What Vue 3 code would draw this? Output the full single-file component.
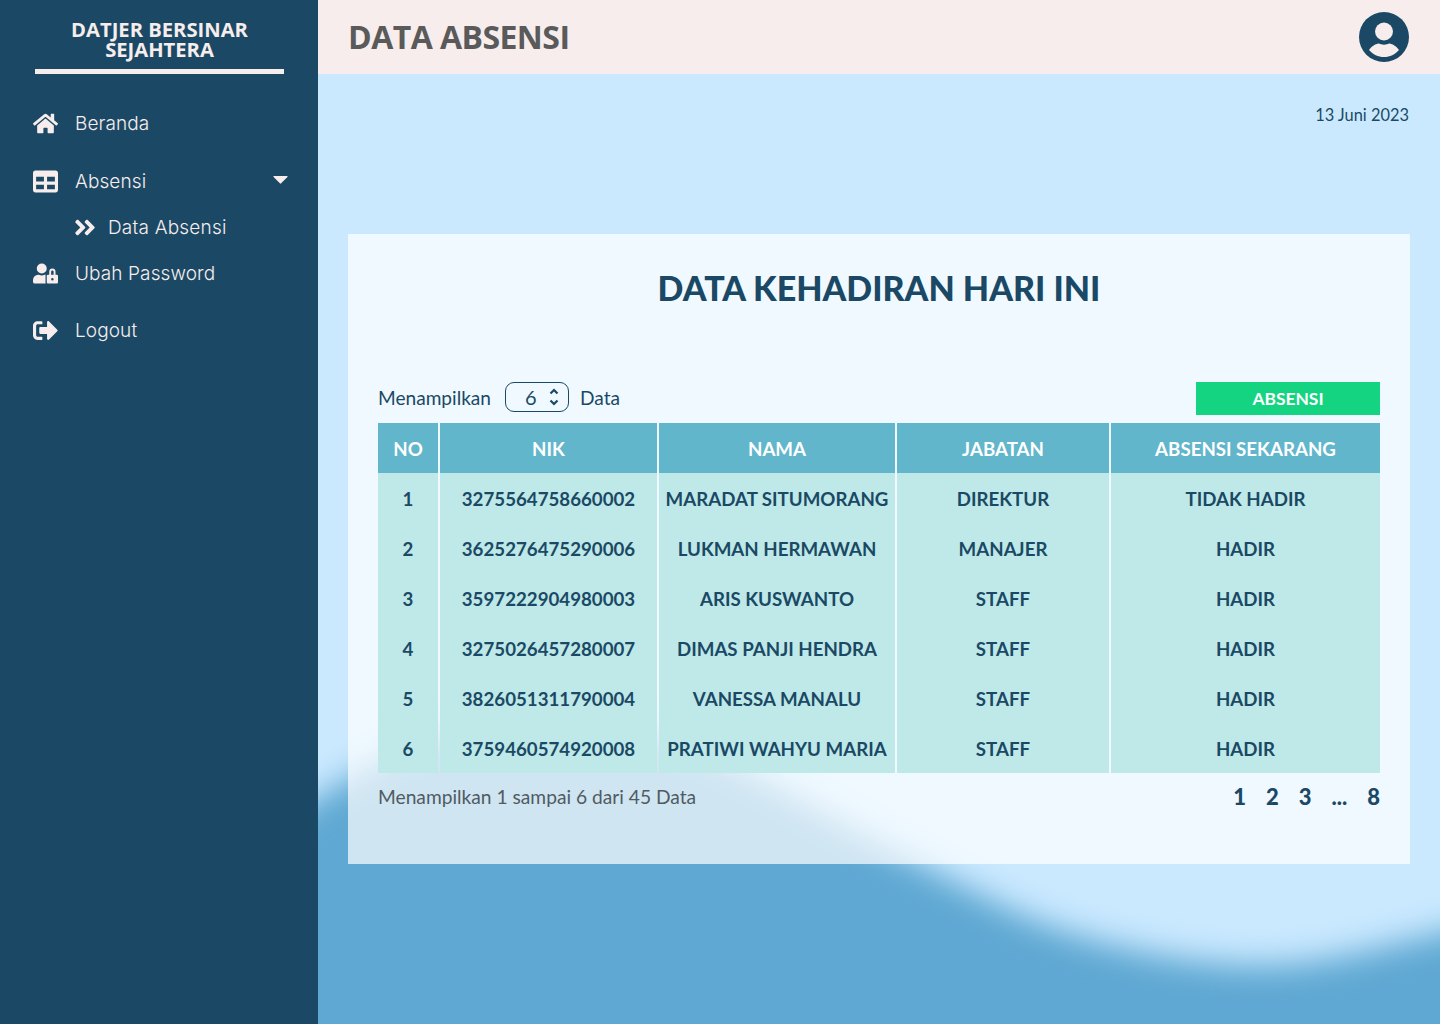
<template>
  <div class="page">
    <aside class="sidebar">
      <div class="brand">
        <div class="brand-name">DATJER BERSINAR<br />SEJAHTERA</div>
      </div>
      <nav class="menu">
        <a class="item item-first">
          <svg class="ico" viewBox="0 0 576 512"><path :d="icons.home" /></svg>
          <span>Beranda</span>
        </a>
        <a class="item">
          <svg class="ico" viewBox="0 0 512 512"><path :d="icons.table" /></svg>
          <span>Absensi</span>
          <svg class="caret" viewBox="0 0 16 9"><path d="M0.6 0h14.8c.5 0 .8.6.4 1L8.4 8.4a.6.6 0 0 1-.8 0L.2 1C-.2.6.1 0 .6 0z" /></svg>
        </a>
        <a class="subitem">
          <svg class="ico-sub" viewBox="0 0 448 512"><path :d="icons.angles" /></svg>
          <span>Data Absensi</span>
        </a>
        <a class="item">
          <svg class="ico" viewBox="0 0 640 512"><path :d="icons.userLock" /></svg>
          <span>Ubah Password</span>
        </a>
        <a class="item">
          <svg class="ico" viewBox="0 0 512 512"><path :d="icons.logout" /></svg>
          <span>Logout</span>
        </a>
      </nav>
    </aside>

    <main class="main">
      <svg class="wave" viewBox="-100 0 1322 1050">
        <path d="M-100 790 C-30 750 80 650 200 650 C310 650 380 670 432 699 C490 730 540 760 602 790 C650 815 690 835 716 846 C780 872 880 893 952 891 C1020 889 1070 870 1222 835 L1222 1050 L-100 1050 Z" />
      </svg>

      <header class="topbar">
        <h1>DATA ABSENSI</h1>
        <svg class="avatar" viewBox="0 0 50 50">
          <circle cx="25" cy="25" r="25" fill="#1b4965" />
          <circle cx="25" cy="19.500" r="9" fill="#f7eded" />
          <path d="M10 38 C13 33.500 18 31.500 20 31.500 C22 33 28 33 30 31.500 C32 31.500 37 33.500 40 38 C36 42.500 31 45 25 45 C19 45 14 42.500 10 38 Z" fill="#f7eded" />
        </svg>
      </header>

      <div class="date">13 Juni 2023</div>

      <section class="card">
        <h2>DATA KEHADIRAN HARI INI</h2>

        <div class="controls">
          <div class="show">
            <span>Menampilkan</span>
            <div class="select">
              <span class="select-value">6</span>
              <svg class="updown" viewBox="0 0 10 20">
                <path d="M1.500 6.500 L5 3 L8.500 6.500 M1.500 13.500 L5 17 L8.500 13.500" />
              </svg>
            </div>
            <span>Data</span>
          </div>
          <button class="btn">ABSENSI</button>
        </div>

        <table class="grid">
          <colgroup>
            <col style="width: 60px" />
            <col style="width: 217px" />
            <col style="width: 236px" />
            <col style="width: 212px" />
            <col />
          </colgroup>
          <thead>
            <tr>
              <th>NO</th>
              <th>NIK</th>
              <th>NAMA</th>
              <th>JABATAN</th>
              <th>ABSENSI SEKARANG</th>
            </tr>
          </thead>
          <tbody>
            <tr v-for="row in rows" :key="row.no">
              <td>{{ row.no }}</td>
              <td>{{ row.nik }}</td>
              <td>{{ row.nama }}</td>
              <td>{{ row.jabatan }}</td>
              <td>{{ row.status }}</td>
            </tr>
          </tbody>
        </table>

        <div class="foot">
          <span class="summary">Menampilkan 1 sampai 6 dari 45 Data</span>
          <div class="pages">
            <span>1</span>
            <span>2</span>
            <span>3</span>
            <span>...</span>
            <span>8</span>
          </div>
        </div>
      </section>
    </main>
  </div>
</template>

<script setup>
const icons = {
  home: 'M280.37 148.26L96 300.11V464a16 16 0 0 0 16 16l112.06-.29a16 16 0 0 0 15.92-16V368a16 16 0 0 1 16-16h64a16 16 0 0 1 16 16v95.64a16 16 0 0 0 16 16.05L464 480a16 16 0 0 0 16-16V300L295.67 148.26a12.19 12.19 0 0 0-15.3 0zM571.6 251.47L488 182.56V44.05a12 12 0 0 0-12-12h-56a12 12 0 0 0-12 12v72.61L318.47 43a48 48 0 0 0-61 0L4.34 251.47a12 12 0 0 0-1.6 16.9l25.5 31A12 12 0 0 0 45.15 301l235.22-193.74a12.19 12.19 0 0 1 15.3 0L530.9 301a12 12 0 0 0 16.9-1.6l25.5-31a12 12 0 0 0-1.7-16.93z',
  table: 'M464 32H48C21.49 32 0 53.49 0 80v352c0 26.51 21.49 48 48 48h416c26.51 0 48-21.49 48-48V80c0-26.51-21.49-48-48-48zM224 416H64v-96h160v96zm0-160H64v-96h160v96zm224 160H288v-96h160v96zm0-160H288v-96h160v96z',
  angles: 'M224.3 273l-136 136c-9.4 9.4-24.6 9.4-33.9 0l-22.6-22.6c-9.4-9.4-9.4-24.6 0-33.9l96.4-96.4-96.4-96.4c-9.4-9.4-9.4-24.6 0-33.9L54.3 103c9.4-9.4 24.6-9.4 33.9 0l136 136c9.5 9.4 9.5 24.6.1 34zm192-34l-136-136c-9.4-9.4-24.6-9.4-33.9 0l-22.6 22.6c-9.4 9.4-9.4 24.6 0 33.9l96.4 96.4-96.4 96.4c-9.4 9.4-9.4 24.6 0 33.9l22.6 22.6c9.4 9.4 24.6 9.4 33.9 0l136-136c9.4-9.2 9.4-24.4 0-33.8z',
  userLock: 'M224 256A128 128 0 1 0 96 128a128 128 0 0 0 128 128zm96 64a63.08 63.08 0 0 1 8.1-30.5c-4.8-.5-9.5-1.5-14.5-1.5h-16.7a174.08 174.08 0 0 1-145.8 0h-16.7A134.43 134.43 0 0 0 0 422.4V464a48 48 0 0 0 48 48h280.9a63.54 63.54 0 0 1-8.9-32zm288-32h-32v-80a80 80 0 0 0-160 0v80h-32a32 32 0 0 0-32 32v160a32 32 0 0 0 32 32h224a32 32 0 0 0 32-32V320a32 32 0 0 0-32-32zM496 432a32 32 0 1 1 32-32 32 32 0 0 1-32 32zm32-144h-64v-80a32 32 0 0 1 64 0z',
  logout: 'M497 273L329 441c-15 15-41 4.500-41-17v-96H152c-13.300 0-24-10.700-24-24v-96c0-13.300 10.700-24 24-24h136V88c0-21.400 25.900-32 41-17l168 168c9.300 9.400 9.300 24.600 0 34zM192 436v-40c0-6.600-5.400-12-12-12H96c-17.700 0-32-14.300-32-32V160c0-17.700 14.300-32 32-32h84c6.600 0 12-5.400 12-12V76c0-6.600-5.400-12-12-12H96c-53 0-96 43-96 96v192c0 53 43 96 96 96h84c6.600 0 12-5.400 12-12z'
}

const rows = [
  { no: 1, nik: '3275564758660002', nama: 'MARADAT SITUMORANG', jabatan: 'DIREKTUR', status: 'TIDAK HADIR' },
  { no: 2, nik: '3625276475290006', nama: 'LUKMAN HERMAWAN', jabatan: 'MANAJER', status: 'HADIR' },
  { no: 3, nik: '3597222904980003', nama: 'ARIS KUSWANTO', jabatan: 'STAFF', status: 'HADIR' },
  { no: 4, nik: '3275026457280007', nama: 'DIMAS PANJI HENDRA', jabatan: 'STAFF', status: 'HADIR' },
  { no: 5, nik: '3826051311790004', nama: 'VANESSA MANALU', jabatan: 'STAFF', status: 'HADIR' },
  { no: 6, nik: '3759460574920008', nama: 'PRATIWI WAHYU MARIA', jabatan: 'STAFF', status: 'HADIR' }
]
</script>

<style>
html,
body {
  margin: 0;
  background: #cae9ff;
}
</style>

<style scoped>
.page {
  display: flex;
  width: 1440px;
  height: 1024px;
  overflow: hidden;
  font-family: "Lato", "Open Sans", sans-serif;
  color: #1b4965;
}

.sidebar {
  width: 318px;
  flex-shrink: 0;
  background: #1b4965;
  color: #f7eded;
  font-family: "Inter", "Open Sans", sans-serif;
}

.brand {
  margin: 0 34px 0 35px;
  padding: 19px 0 10px;
  border-bottom: 5px solid #f7eded;
  text-align: center;
}

.brand-name {
  font-family: "Open Sans", sans-serif;
  font-size: 20.2px;
  font-weight: 700;
  line-height: 20px;
}

.menu {
  padding: 0 30px 0 33px;
}

.item {
  display: flex;
  align-items: center;
  height: 24px;
  font-size: 19px;
  font-weight: 300;
  letter-spacing: 0.1px;
  margin-bottom: 33px;
}

.item-first {
  margin-top: 37px;
  margin-bottom: 34px;
}

.subitem {
  display: flex;
  align-items: center;
  height: 24px;
  margin: -11px 0 22px 41px;
  font-size: 19px;
  font-weight: 300;
  letter-spacing: 0.2px;
}

.ico {
  width: 25px;
  height: 25px;
  margin-right: 17px;
  fill: #f7eded;
  flex-shrink: 0;
}

.ico-sub {
  width: 22px;
  height: 25px;
  margin-right: 12px;
  fill: #f7eded;
}

.caret {
  width: 15px;
  height: 8px;
  margin-left: auto;
  margin-bottom: 2px;
  fill: #f7eded;
}

.main {
  position: relative;
  flex: 1;
  min-width: 0;
  overflow: hidden;
}

.wave {
  position: absolute;
  left: -100px;
  top: 74px;
  width: 1322px;
  height: 1050px;
  fill: #5fa8d3;
  filter: blur(16px);
}

.topbar {
  position: relative;
  display: flex;
  align-items: center;
  justify-content: space-between;
  height: 74px;
  padding: 0 31px 0 30px;
  background: #f7eded;
}

.topbar h1 {
  margin: 0 0 2px;
  font-family: "Open Sans", sans-serif;
  font-size: 32px;
  font-weight: 700;
  letter-spacing: -0.55px;
  color: #5a5a5a;
}

.avatar {
  width: 50px;
  height: 50px;
}

.date {
  position: relative;
  margin: 30px 31px 0 0;
  height: 22px;
  line-height: 22px;
  text-align: right;
  font-size: 16.4px;
}

.card {
  position: relative;
  box-sizing: border-box;
  width: 1062px;
  height: 630px;
  margin: 108px 0 0 30px;
  padding: 0 30px;
  background: rgba(255, 255, 255, 0.7);
}

.card h2 {
  margin: 0;
  padding-top: 31px;
  height: 148px;
  box-sizing: border-box;
  text-align: center;
  font-size: 34px;
  line-height: 46px;
  font-weight: 900;
}

.controls {
  display: flex;
  justify-content: space-between;
  align-items: flex-start;
  height: 33px;
  margin-bottom: 8px;
}

.show {
  display: flex;
  align-items: center;
  height: 30px;
  font-size: 19.1px;
}

.select {
  box-sizing: border-box;
  display: flex;
  align-items: center;
  justify-content: space-between;
  width: 64px;
  height: 30px;
  margin: 0 11px 0 14px;
  padding: 0 9px 0 19px;
  border: 1px solid #1b4965;
  border-radius: 9px;
  font-size: 20px;
}

.updown {
  width: 10px;
  height: 20px;
  fill: none;
  stroke: #1b4965;
  stroke-width: 2.2;
}

.btn {
  width: 184px;
  height: 33px;
  padding: 0;
  border: 0;
  background: #15d481;
  color: #fff;
  font-family: inherit;
  font-size: 17.4px;
  font-weight: 700;
}

.grid {
  width: 1006px;
  margin: 0 -2px;
  border-collapse: separate;
  border-spacing: 2px 0;
  table-layout: fixed;
  font-size: 18.7px;
  font-weight: 700;
  text-align: center;
}

.grid th,
.grid td {
  box-sizing: border-box;
  height: 50px;
  padding: 2px 0 0;
}

.grid th {
  background: #62b6cb;
  color: #fff;
}

.grid td {
  background: #bee9e8;
}

.foot {
  display: flex;
  justify-content: space-between;
  align-items: center;
  height: 46px;
}

.summary {
  font-size: 19.2px;
  color: #4f5b62;
}

.pages {
  display: flex;
  gap: 20px;
  font-size: 22px;
  font-weight: 900;
}
</style>
